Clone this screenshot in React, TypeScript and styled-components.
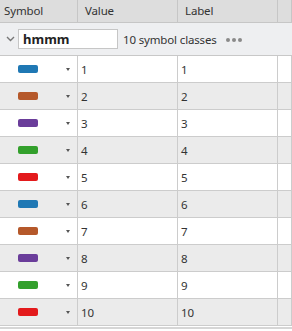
import styled, { createGlobalStyle } from "styled-components";

const GlobalStyle = createGlobalStyle`
  body {
    margin: 0;
    background: #ffffff;
    font-family: "Noto Sans", "Open Sans", sans-serif;
    font-size: 11.5px;
    letter-spacing: -0.15px;
    color: #333333;
  }
`;

const COLORS = ["#1f78b4", "#b5582a", "#6a3d9a", "#33a02c", "#e31a1c"];

const rows = Array.from({ length: 10 }, (_, i) => ({
  value: String(i + 1),
  label: String(i + 1),
  color: COLORS[i % COLORS.length],
}));

const App = () => {
  return (
    <Wrapper>
      <GlobalStyle />
      <HeaderRow>
        <HeaderCell $pad={4}>Symbol</HeaderCell>
        <HeaderCell $pad={7}>Value</HeaderCell>
        <HeaderCell $pad={7}>Label</HeaderCell>
        <HeaderCell $pad={0} />
      </HeaderRow>

      <GroupRow>
        <Chevron width="9" height="6" viewBox="0 0 9 6">
          <path d="M1 1 L4.5 4.5 L8 1" fill="none" stroke="#777" strokeWidth="1.4" />
        </Chevron>
        <GroupInput defaultValue="hmmm" />
        <GroupCount>10 symbol classes</GroupCount>
        <Dots>
          <span />
          <span />
          <span />
        </Dots>
      </GroupRow>

      {rows.map((row, i) => (
        <DataRow key={row.value} $striped={i % 2 === 1}>
          <SymbolCell>
            <Swatch $color={row.color} />
            <Caret />
          </SymbolCell>
          <TextCell>{row.value}</TextCell>
          <TextCell>{row.label}</TextCell>
          <TextCell />
        </DataRow>
      ))}

      <Footer />
    </Wrapper>
  );
};

export default App;

const Wrapper = styled.div`
  width: 292px;
  height: 331px;
  overflow: hidden;
  background: #ffffff;
`;

const columns = "78px 100px 100px 14px";

const HeaderRow = styled.div`
  display: grid;
  grid-template-columns: ${columns};
  height: 22px;
  background: #dddddd;
  border-bottom: 1px solid #c6c6c6;
`;

const HeaderCell = styled.div<{ $pad: number }>`
  display: flex;
  align-items: center;
  padding-left: ${(p) => p.$pad}px;
  border-right: 1px solid #c6c6c6;
  color: #333333;
  line-height: 1;
`;

const GroupRow = styled.div`
  display: flex;
  align-items: center;
  height: 32px;
  background: #eeeff1;
  border-bottom: 1px solid #c8c8c8;
  padding-left: 6px;
`;

const Chevron = styled.svg`
  display: block;
  margin-right: 3px;
`;

const GroupInput = styled.input`
  box-sizing: border-box;
  width: 100px;
  height: 20px;
  margin: 0;
  padding: 0 4px;
  border: 1px solid #c6c6c6;
  background: #ffffff;
  font-family: inherit;
  font-size: 13px;
  font-weight: 700;
  letter-spacing: 0;
  color: #222222;
  outline: none;
`;

const GroupCount = styled.div`
  margin-left: 5px;
  color: #333333;
`;

const Dots = styled.div`
  display: flex;
  gap: 2px;
  margin-left: 9px;
  margin-top: 1px;

  span {
    width: 4px;
    height: 4px;
    border-radius: 50%;
    background: #8a8a8a;
  }
`;

const DataRow = styled.div<{ $striped: boolean }>`
  display: grid;
  grid-template-columns: ${columns};
  height: 26px;
  background: ${(p) => (p.$striped ? "#ebebeb" : "#ffffff")};
  border-bottom: 1px solid #cccccc;
`;

const SymbolCell = styled.div`
  display: flex;
  align-items: center;
  padding-left: 18px;
  border-right: 1px solid #cccccc;
`;

const Swatch = styled.div<{ $color: string }>`
  width: 20px;
  height: 8px;
  border-radius: 2px;
  background: ${(p) => p.$color};
`;

const Caret = styled.div`
  width: 0;
  height: 0;
  margin-left: 28px;
  border-left: 2.5px solid transparent;
  border-right: 2.5px solid transparent;
  border-top: 3px solid #555555;
`;

const TextCell = styled.div`
  display: flex;
  align-items: center;
  padding-left: 3px;
  border-right: 1px solid #cccccc;
  color: #333333;
`;

const Footer = styled.div`
  margin-top: 1px;
  height: 2px;
  background: #d6d6d6;
`;
